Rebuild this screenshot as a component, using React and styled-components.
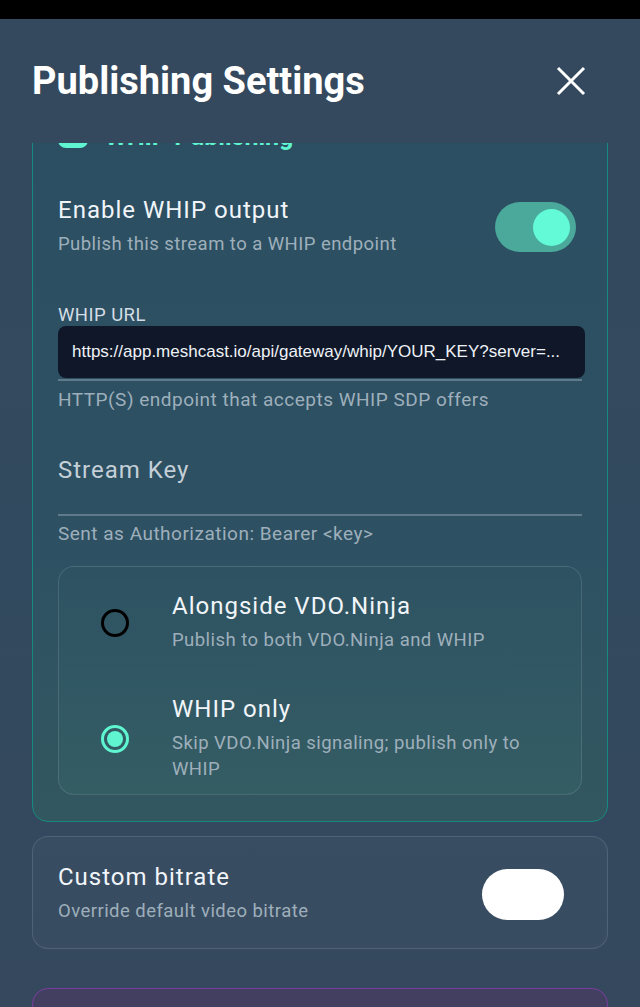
import React, { useLayoutEffect, useRef } from "react";
import styled, { createGlobalStyle, css } from "styled-components";

const Global = createGlobalStyle`
  html, body { margin: 0; padding: 0; background: #000; }
  body { font-family: Roboto, "Noto Sans", sans-serif; -webkit-font-smoothing: antialiased; }
  * { box-sizing: border-box; }
`;

const Screen = styled.div`
  width: 640px;
  height: 1007px;
  display: flex;
  flex-direction: column;
  background: #000;
  overflow: hidden;
`;

const StatusBar = styled.div`
  height: 19px;
  flex: none;
  background: #000;
`;

const Panel = styled.div`
  flex: 1;
  min-height: 0;
  display: flex;
  flex-direction: column;
  background: linear-gradient(180deg, #34495e 0%, #324a5f 55%, #35485e 100%);
`;

const Header = styled.header`
  height: 124px;
  flex: none;
  display: flex;
  align-items: center;
  justify-content: space-between;
  padding: 0 49px 0 32px;
  background: #34495e;
`;

const Title = styled.h1`
  margin: 0;
  font-size: 38px;
  font-weight: 700;
  color: #fff;
`;

const CloseButton = styled.button`
  width: 40px;
  height: 40px;
  border: 0;
  padding: 0;
  background: none;
  display: flex;
  align-items: center;
  justify-content: center;
`;

const Scroller = styled.div`
  flex: 1;
  min-height: 0;
  overflow: hidden;
`;

const Content = styled.div`
  padding: 16px 32px 60px;
  display: flex;
  flex-direction: column;
`;

const cardVariants = {
  whip: css`
    border: 1px solid #178a80;
    background: linear-gradient(180deg, #2c4e62 0%, #2d5163 60%, #33575f 100%);
    padding: 24px 25px 26px;
  `,
  plain: css`
    border: 1px solid rgba(255, 255, 255, 0.12);
    background: rgba(255, 255, 255, 0.025);
    padding: 27px 25px 24px;
    margin-top: 14px;
  `,
  purple: css`
    border: 1px solid #7a3d9f;
    background: #433f60;
    padding: 24px 25px;
    margin-top: 39px;
    min-height: 140px;
  `,
};

const Card = styled.section`
  border-radius: 16px;
  ${(p) => cardVariants[p.$variant]}
`;

const CardHeading = styled.div`
  display: flex;
  align-items: center;
  gap: 17px;
  height: 30px;
  margin-bottom: 46px;
  color: #5ef5d0;
  font-size: 25px;
  font-weight: 700;
`;

const SettingRow = styled.div`
  display: flex;
  align-items: center;
  justify-content: space-between;
`;

const RowText = styled.div`
  display: flex;
  flex-direction: column;
  gap: 8px;
`;

const RowTitle = styled.div`
  font-size: 24px;
  line-height: 26px;
  color: #f1f5f9;
  letter-spacing: 1px;
`;

const RowSub = styled.div`
  font-size: 18.5px;
  line-height: 26px;
  color: #9eafbb;
  letter-spacing: 0.45px;
`;

const Toggle = styled.span`
  flex: none;
  display: flex;
  align-items: center;
  justify-content: flex-end;
  width: ${(p) => (p.$on ? 81 : 82)}px;
  height: ${(p) => (p.$on ? 50 : 51)}px;
  border-radius: 26px;
  padding: 0 6px;
  margin-right: ${(p) => p.$inset}px;
  background: ${(p) => (p.$on ? "#4aa99b" : "#ffffff")};
`;

const Thumb = styled.span`
  width: 37px;
  height: 37px;
  border-radius: 50%;
  background: #63fbd7;
`;

const FieldLabel = styled.div`
  margin-top: 48px;
  font-size: 18.5px;
  line-height: 20px;
  color: #d4dde4;
  letter-spacing: 0.45px;
`;

const InputWrap = styled.div`
  margin-top: 1px;
  border-bottom: 2px solid #5f7a8a;
  padding-bottom: 1px;
`;

const UrlInput = styled.input`
  display: block;
  width: calc(100% + 3px);
  height: 52px;
  border: 0;
  outline: none;
  border-radius: 8px;
  background: #0f1729;
  padding: 0 14px;
  font-family: "Liberation Sans", Arial, sans-serif;
  font-size: 17px;
  color: #eef2f6;
  text-overflow: ellipsis;
`;

const Helper = styled.div`
  margin-top: ${(p) => p.$top}px;
  font-size: 19px;
  line-height: 20px;
  color: #9eafbb;
  letter-spacing: 0.5px;
`;

const KeyInput = styled.input`
  display: block;
  width: 100%;
  margin-top: 47px;
  height: 59px;
  padding: 0 0 31px;
  border: 0;
  border-bottom: 2px solid #5f7a8a;
  background: transparent;
  outline: none;
  font-family: Roboto, sans-serif;
  font-size: 24px;
  line-height: 26px;
  color: #fff;
  letter-spacing: 1px;
  &::placeholder {
    color: #c4cfd7;
  }
`;

const RadioGroup = styled.div`
  margin-top: 22px;
  border: 1px solid rgba(255, 255, 255, 0.12);
  border-radius: 16px;
  padding-top: 10px;
  display: flex;
  flex-direction: column;
  gap: 15px;
  background: linear-gradient(180deg, rgba(255, 255, 255, 0.005), rgba(94, 245, 208, 0.045));
`;

const Option = styled.label`
  display: grid;
  grid-template-columns: 113px 1fr;
  align-items: center;
  padding: 16px 30px 12px 0;
`;

const Radio = styled.span`
  justify-self: center;
  width: 28px;
  height: 28px;
  margin-right: 2px;
  border-radius: 50%;
  border: 3px solid ${(p) => (p.$checked ? "#5ef5d0" : "#000")};
  display: flex;
  align-items: center;
  justify-content: center;
  &::after {
    content: "";
    width: 16px;
    height: 16px;
    border-radius: 50%;
    background: ${(p) => (p.$checked ? "#5ef5d0" : "transparent")};
  }
`;

const CloseIcon = () => (
  <svg width="30" height="30" viewBox="0 0 30 30">
    <path d="M2 2 L28 28 M28 2 L2 28" stroke="#fff" strokeWidth="3" fill="none" />
  </svg>
);

const HeadingIcon = () => (
  <svg width="30" height="24" viewBox="0 0 30 24">
    <rect x="0" y="0" width="30" height="24" rx="8" fill="#5ef5d0" />
  </svg>
);

export default function App() {
  const scroller = useRef(null);
  useLayoutEffect(() => {
    if (scroller.current) scroller.current.scrollTop = 63;
  }, []);

  return (
    <>
      <Global />
      <Screen>
        <StatusBar />
        <Panel>
          <Header>
            <Title>Publishing Settings</Title>
            <CloseButton aria-label="Close">
              <CloseIcon />
            </CloseButton>
          </Header>
          <Scroller ref={scroller}>
            <Content>
              <Card $variant="whip">
                <CardHeading>
                  <HeadingIcon />
                  <span>WHIP Publishing</span>
                </CardHeading>
                <SettingRow>
                  <RowText>
                    <RowTitle>Enable WHIP output</RowTitle>
                    <RowSub>Publish this stream to a WHIP endpoint</RowSub>
                  </RowText>
                  <Toggle $on $inset={6}>
                    <Thumb />
                  </Toggle>
                </SettingRow>

                <FieldLabel>WHIP URL</FieldLabel>
                <InputWrap>
                  <UrlInput
                    readOnly
                    value="https://app.meshcast.io/api/gateway/whip/YOUR_KEY?server=..."
                  />
                </InputWrap>
                <Helper $top={9}>HTTP(S) endpoint that accepts WHIP SDP offers</Helper>

                <KeyInput placeholder="Stream Key" />
                <Helper $top={8}>Sent as Authorization: Bearer &lt;key&gt;</Helper>

                <RadioGroup>
                  <Option>
                    <Radio />
                    <RowText>
                      <RowTitle>Alongside VDO.Ninja</RowTitle>
                      <RowSub>Publish to both VDO.Ninja and WHIP</RowSub>
                    </RowText>
                  </Option>
                  <Option>
                    <Radio $checked />
                    <RowText>
                      <RowTitle>WHIP only</RowTitle>
                      <RowSub>Skip VDO.Ninja signaling; publish only to WHIP</RowSub>
                    </RowText>
                  </Option>
                </RadioGroup>
              </Card>

              <Card $variant="plain">
                <SettingRow>
                  <RowText>
                    <RowTitle>Custom bitrate</RowTitle>
                    <RowSub>Override default video bitrate</RowSub>
                  </RowText>
                  <Toggle $inset={18} />
                </SettingRow>
              </Card>

              <Card $variant="purple" />
            </Content>
          </Scroller>
        </Panel>
      </Screen>
    </>
  );
}
